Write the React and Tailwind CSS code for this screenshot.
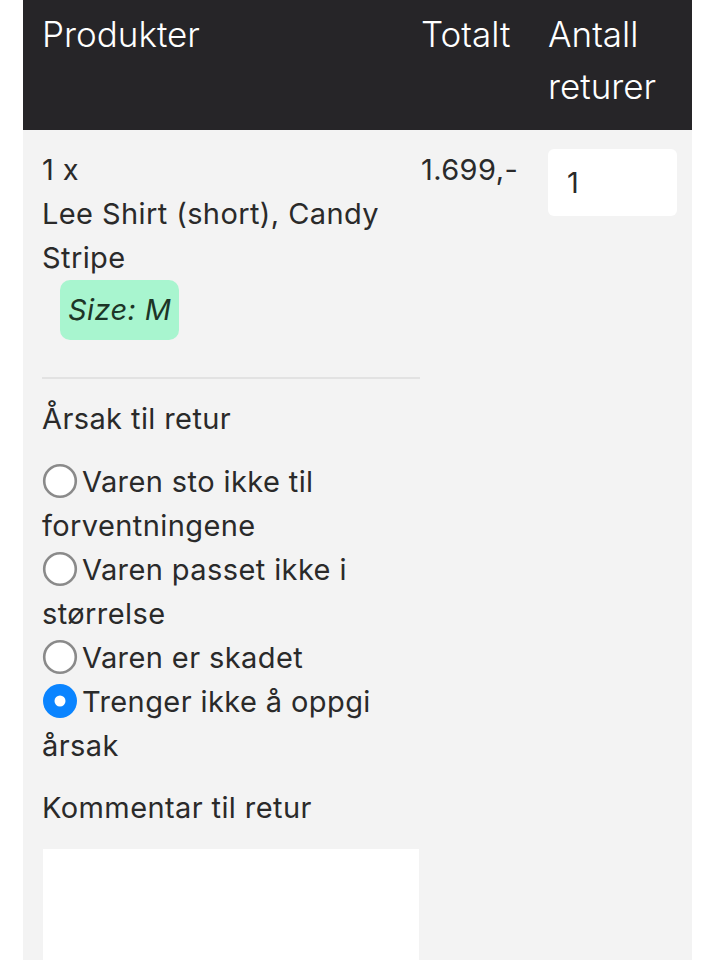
import React, { useState } from "react";

const reasons = [
  "Varen sto ikke til forventningene",
  "Varen passet ikke i størrelse",
  "Varen er skadet",
  "Trenger ikke å oppgi årsak",
];

function Radio({ checked }) {
  return (
    <svg width="36" height="36" viewBox="0 0 36 36" className="inline-block align-[-7px] mr-[4px]">
      {checked ? (
        <>
          <circle cx="18" cy="18" r="17" fill="#0a84ff" />
          <circle cx="18" cy="18" r="5.5" fill="#fff" />
        </>
      ) : (
        <circle cx="18" cy="18" r="15.8" fill="#fff" stroke="#8a8a8a" strokeWidth="2.6" />
      )}
    </svg>
  );
}

export default function App() {
  const [reason, setReason] = useState(3);
  const [qty, setQty] = useState("1");

  return (
    <div className="min-h-screen bg-white px-[23px] text-[#2a2a2a] [font-family:Inter,'Noto_Sans',sans-serif]">
      <div className="w-[669px] bg-[#f3f3f3] min-h-[960px]">
        {/* header */}
        <div className="flex bg-[#262528] pl-[19px] pt-[8px] pb-[18px] text-white text-[35px] leading-[52px] font-light">
          <div className="w-[379px]">Produkter</div>
          <div className="w-[127px]">Totalt</div>
          <div className="w-[129px]">Antall returer</div>
        </div>

        {/* row */}
        <div className="flex pl-[19px] pt-[18px] text-[29px] leading-[44px] tracking-[0.4px]">
          <div className="w-[379px] pr-[1px]">
            <div>1 x</div>
            <div>Lee Shirt (short), Candy Stripe</div>
            <div className="ml-[18px] inline-block rounded-[10px] bg-[#a8f5cf] px-[8px] py-[8px] italic text-[#1d3527]">
              Size: M
            </div>
            <div className="mt-[37px] mb-[18px] h-[2px] bg-[#e2e2e2]" />
            <div>Årsak til retur</div>
            <div className="mt-[19px]">
              {reasons.map((r, i) => (
                <label key={r} className="block cursor-pointer" onClick={() => setReason(i)}>
                  <Radio checked={reason === i} />
                  {r}
                </label>
              ))}
            </div>
            <div className="mt-[18px]">Kommentar til retur</div>
            <textarea className="mt-[19px] ml-[1px] block w-[376px] h-[200px] bg-white outline-none resize-none" />
          </div>
          <div className="w-[127px]">1.699,-</div>
          <div className="w-[129px] pt-[1px]">
            <input
              value={qty}
              onChange={(e) => setQty(e.target.value)}
              className="w-[129px] h-[67px] rounded-[6px] bg-white px-[19px] text-[29px] outline-none"
            />
          </div>
        </div>
      </div>
    </div>
  );
}
